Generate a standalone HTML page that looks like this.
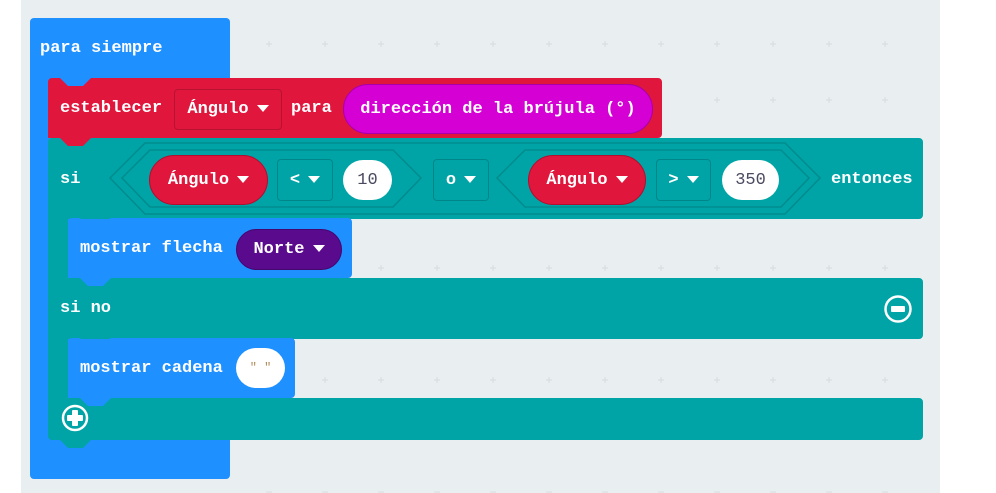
<!DOCTYPE html>
<html><head><meta charset="utf-8"><style>
*{margin:0;padding:0;box-sizing:border-box}
body{width:996px;height:493px;background:#fff;position:relative;overflow:hidden;font-family:"Liberation Mono",monospace;font-weight:bold;font-size:17px;letter-spacing:0;color:#fff}
.a{position:absolute}
.bg{left:21px;top:0;width:919px;height:493px;background:#e9eef0}
.t{position:absolute;white-space:nowrap;line-height:20px}
.pill{position:absolute;border-radius:26px;display:flex;align-items:center;justify-content:center;white-space:nowrap}
.box{position:absolute;border:1px solid rgba(0,0,0,.18);border-radius:4px;display:flex;align-items:center;justify-content:center;white-space:nowrap}
.tri{display:inline-block;width:0;height:0;border-left:6px solid transparent;border-right:6px solid transparent;border-top:7px solid #fff;margin-left:8px;vertical-align:middle;position:relative;top:-1px}
</style></head><body>
<div class="a bg"></div>
<svg class="a" style="left:0;top:0" width="996" height="493">
<g stroke="#d6dcdf" stroke-width="1">
<path d="M266 44h6M269 41v6 M322 44h6M325 41v6 M378 44h6M381 41v6 M434 44h6M437 41v6 M490 44h6M493 41v6 M546 44h6M549 41v6 M602 44h6M605 41v6 M658 44h6M661 41v6 M714 44h6M717 41v6 M770 44h6M773 41v6 M826 44h6M829 41v6 M882 44h6M885 41v6"/>
<path d="M714 100h6M717 97v6 M770 100h6M773 97v6 M826 100h6M829 97v6 M882 100h6M885 97v6"/>
<path d="M378 268h6M381 265v6 M434 268h6M437 265v6 M490 268h6M493 265v6 M546 268h6M549 265v6 M602 268h6M605 265v6 M658 268h6M661 265v6 M714 268h6M717 265v6 M770 268h6M773 265v6 M826 268h6M829 265v6 M882 268h6M885 265v6"/>
<path d="M322 380h6M325 377v6 M378 380h6M381 377v6 M434 380h6M437 377v6 M490 380h6M493 377v6 M546 380h6M549 377v6 M602 380h6M605 377v6 M658 380h6M661 377v6 M714 380h6M717 377v6 M770 380h6M773 377v6 M826 380h6M829 377v6 M882 380h6M885 377v6"/>
<path d="M266 492h6M322 492h6M378 492h6M434 492h6M490 492h6M546 492h6M602 492h6M658 492h6M714 492h6M770 492h6M826 492h6M882 492h6"/>
</g>
<rect x="30" y="18" width="200" height="461" rx="4" fill="#1e90ff"/>
<path d="M52 78h8l8 8h15l8-8h567a4 4 0 0 1 4 4v52a4 4 0 0 1-4 4H48V82a4 4 0 0 1 4-4z" fill="#e0163c"/>
<path d="M52 138h867a4 4 0 0 1 4 4v73a4 4 0 0 1-4 4H68v59h851a4 4 0 0 1 4 4v53a4 4 0 0 1-4 4H68v59h851a4 4 0 0 1 4 4v34a4 4 0 0 1-4 4H52a4 4 0 0 1-4-4V142a4 4 0 0 1 4-4z" fill="#00a4a6"/>
<path d="M60 138l8 8h15l8-8z" fill="#e0163c"/>
<path d="M60 440l8 8h15l8-8z" fill="#00a4a6"/>
<path d="M72 218h8l8 8h15l8-8h237a4 4 0 0 1 4 4v52a4 4 0 0 1-4 4H68V222a4 4 0 0 1 4-4z" fill="#1e90ff"/>
<path d="M80 278l8 8h15l8-8z" fill="#1e90ff"/>
<path d="M72 338h8l8 8h15l8-8h180a4 4 0 0 1 4 4v52a4 4 0 0 1-4 4H68V342a4 4 0 0 1 4-4z" fill="#1e90ff"/>
<path d="M80 398l8 8h15l8-8z" fill="#1e90ff"/>
<polygon points="110,178 145,143 785,143 820,178 785,214 145,214" fill="none" stroke="#008b8d" stroke-width="1.5"/>
<polygon points="122,178 150,150 393,150 421,178 393,207 150,207" fill="none" stroke="#008b8d" stroke-width="1.5"/>
<polygon points="497,178 525,150 781,150 809,178 781,207 525,207" fill="none" stroke="#008b8d" stroke-width="1.5"/>
<circle cx="898" cy="309" r="12.5" fill="none" stroke="#fff" stroke-width="2.5"/>
<rect x="891" y="306" width="14" height="6" rx="1" fill="#fff"/>
<circle cx="75" cy="418" r="12" fill="none" stroke="#fff" stroke-width="2.5"/>
<rect x="72" y="410" width="6" height="16" rx="1" fill="#fff"/>
<rect x="67" y="415" width="16" height="6" rx="1" fill="#fff"/>
</svg>

<div class="t" style="left:40px;top:39px">para siempre</div>
<div class="t" style="left:60px;top:99px">establecer</div>
<div class="box" style="left:174px;top:89px;width:108px;height:41px">Ángulo<span class="tri"></span></div>
<div class="t" style="left:291px;top:99px">para</div>
<div class="pill" style="left:343px;top:84px;width:310px;height:50px;background:#d400d4;border:1px solid #a800a8">dirección de la brújula (°)</div>

<div class="t" style="left:60px;top:170px">si</div>
<div class="pill" style="left:149px;top:155px;width:119px;height:50px;background:#e0163c;border:1px solid #b00f2f">Ángulo<span class="tri"></span></div>
<div class="box" style="left:277px;top:159px;width:56px;height:42px">&lt;<span class="tri"></span></div>
<div class="pill" style="left:343px;top:160px;width:49px;height:40px;background:#fff;color:#4a4a60;font-weight:normal">10</div>
<div class="box" style="left:433px;top:159px;width:56px;height:42px">o<span class="tri"></span></div>
<div class="pill" style="left:528px;top:155px;width:118px;height:50px;background:#e0163c;border:1px solid #b00f2f">Ángulo<span class="tri"></span></div>
<div class="box" style="left:656px;top:159px;width:55px;height:42px">&gt;<span class="tri"></span></div>
<div class="pill" style="left:722px;top:160px;width:57px;height:40px;background:#fff;color:#4a4a60;font-weight:normal">350</div>
<div class="t" style="left:831px;top:170px">entonces</div>

<div class="t" style="left:80px;top:239px">mostrar flecha</div>
<div class="pill" style="left:236px;top:229px;width:106px;height:41px;background:#5a0a8c;border:1px solid #45066e">Norte<span class="tri"></span></div>

<div class="t" style="left:60px;top:299px">si no</div>

<div class="t" style="left:80px;top:359px">mostrar cadena</div>
<div class="pill" style="left:236px;top:348px;width:49px;height:40px;background:#fff;color:#b08a5a;font-weight:normal;font-size:12px">" "</div>
</body></html>
